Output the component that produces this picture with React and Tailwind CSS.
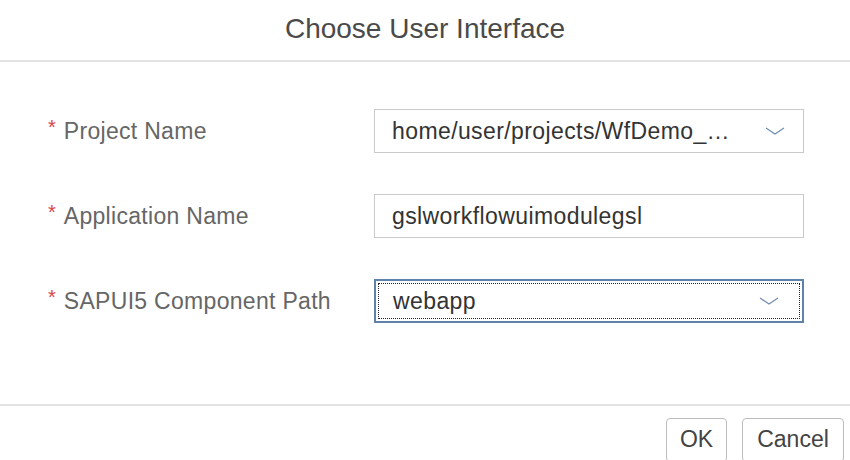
const fields = [
  { label: 'Project Name', value: 'home/user/projects/WfDemo_…', select: true },
  { label: 'Application Name', value: 'gslworkflowuimodulegsl' },
  { label: 'SAPUI5 Component Path', value: 'webapp', select: true, focused: true },
];

function Chevron() {
  return (
    <svg width="20" height="8" viewBox="0 0 20 8" className="shrink-0">
      <path d="M1 1 L10 7 L19 1" fill="none" stroke="#6f8cb0" strokeWidth="1.2" />
    </svg>
  );
}

function Field({ value, select, focused }) {
  if (focused) {
    return (
      <div className="w-[430px] h-[44px] border-2 border-[#5f82aa] p-[2px]">
        <div className="h-full border border-dotted border-[#222] flex items-center pl-[14px] pr-[20px] justify-between">
          <span className="text-[23px] tracking-[0.4px] text-[#333]">{value}</span>
          <Chevron />
        </div>
      </div>
    );
  }
  return (
    <div className="w-[430px] h-[44px] border border-[#c9c9c9] flex items-center pl-[17px] pr-[18px] justify-between">
      <span className="text-[23px] tracking-[0.4px] text-[#333]">{value}</span>
      {select && <Chevron />}
    </div>
  );
}

export default function App() {
  return (
    <div className="w-[850px] h-[460px] bg-white overflow-hidden flex flex-col" style={{ fontFamily: '"Liberation Sans", Arial, sans-serif' }}>
      {/* header */}
      <div className="h-[62px] shrink-0 flex items-center justify-center border-b-2 border-[#e3e3e3] pb-[2px]">
        <h1 className="text-[28px] text-[#4a4a4a]">Choose User Interface</h1>
      </div>

      {/* form */}
      <div className="h-[342px] shrink-0 pt-[47px] pl-[48px] flex flex-col gap-[41px]">
        {fields.map(f => (
          <div key={f.label} className="flex items-center h-[44px]">
            <div className="w-[326px] flex items-start">
              <span className="text-[#d9454c] text-[20px] leading-none mr-[8px] -mt-[3px]">*</span>
              <span className="text-[23px] tracking-[0.3px] text-[#666] leading-none">{f.label}</span>
            </div>
            <Field {...f} />
          </div>
        ))}
      </div>

      {/* footer */}
      <div className="flex-1 border-t-2 border-[#e3e3e3] flex justify-end gap-[15px] pt-[12px] pr-[6px]">
        <button className="w-[61px] h-[44px] border border-[#bdbdbd] rounded-[4px] bg-white text-[23px] text-[#444] pb-[2px]">OK</button>
        <button className="w-[102px] h-[44px] border border-[#bdbdbd] rounded-[4px] bg-white text-[23px] text-[#444] pb-[2px]">Cancel</button>
      </div>
    </div>
  );
}
